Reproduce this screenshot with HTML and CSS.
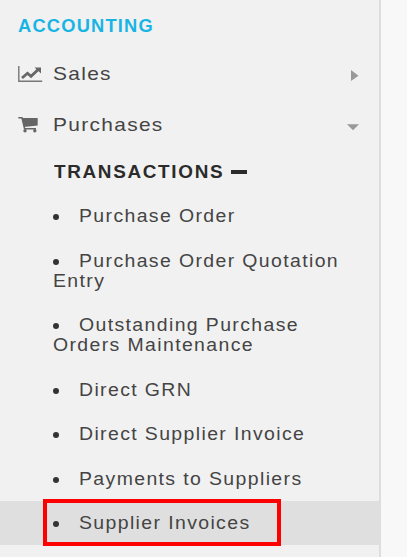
FILE: index.html
```
<!DOCTYPE html>
<html lang="en">
<head>
  <meta charset="UTF-8">
  <meta name="viewport" content="width=device-width, initial-scale=1.0">
  <title>Accounting</title>
  <link rel="stylesheet" href="styles.css">
</head>
<body>
  <nav class="sidebar">
    <h2 class="title">ACCOUNTING</h2>
    <a class="menu">
      <svg class="icon" width="26" height="18" viewBox="0 0 26 18">
        <path d="M.8 1v15.200h23.400" fill="none" stroke="#777" stroke-width="1.400"/>
        <path d="M4 13l5.500-4.700 3.500 3 7.500-7" fill="none" stroke="#666" stroke-width="2.800"/>
        <path d="M16.500 2.500h6.500v6z" fill="#666"/>
      </svg>
      <span class="label">Sales</span>
      <svg class="arrow" width="12" height="14" viewBox="0 0 12 14"><path d="M4 3l7.500 5.700-7.500 5.300z" fill="#999"/></svg>
    </a>
    <a class="menu">
      <svg class="icon" width="26" height="18" viewBox="0 0 26 18">
        <path d="M.3 1.800h3.700l2.600 10.900h11.400" fill="none" stroke="#666" stroke-width="1.500"/>
        <path d="M3.800 2h15.900v7.500L6 11z" fill="#666"/>
        <circle cx="7" cy="14.700" r="1.700" fill="#666"/>
        <circle cx="16.800" cy="14.700" r="1.700" fill="#666"/>
      </svg>
      <span class="label">Purchases</span>
      <svg class="arrow" width="12" height="14" viewBox="0 0 12 14"><path d="M0 6.300h12L6 12.300z" fill="#999"/></svg>
    </a>
    <h3 class="group"><span class="group-text">TRANSACTIONS</span><span class="minus"></span></h3>
    <ul class="list">
      <li class="item"><i class="dot"></i><span class="text">Purchase Order</span></li>
      <li class="item"><i class="dot"></i><span class="text">Purchase Order Quotation</span><br><span class="text">Entry</span></li>
      <li class="item"><i class="dot"></i><span class="text">Outstanding Purchase</span><br><span class="text">Orders Maintenance</span></li>
      <li class="item"><i class="dot"></i><span class="text">Direct GRN</span></li>
      <li class="item"><i class="dot"></i><span class="text">Direct Supplier Invoice</span></li>
      <li class="item"><i class="dot"></i><span class="text">Payments to Suppliers</span></li>
      <li class="item active"><i class="dot"></i><span class="text">Supplier Invoices</span><span class="mark"></span></li>
    </ul>
  </nav>
</body>
</html>
```
FILE: styles.css
```
* {
  box-sizing: border-box;
}
body {
  margin: 0;
  height: 557px;
  overflow: hidden;
  background: #f8f8f8;
  font-family: "Liberation Sans", Arial, sans-serif;
  color: #444;
}
.sidebar {
  width: 381px;
  height: 557px;
  padding-top: 16px;
  background: #f1f1f1;
  border-right: 2px solid #dedede;
}
.title {
  margin: 0 0 12px 18px;
  font-size: 17.5px;
  line-height: 20px;
  letter-spacing: 1.15px;
  color: #18b4e4;
  transform: scaleX(1.045);
  transform-origin: 0 50%;
}
.menu {
  display: flex;
  align-items: center;
  height: 51px;
  padding: 0 20px 0 18px;
}
.icon {
  flex: none;
  margin-right: 9px;
}
.label {
  flex: 1;
  font-size: 19px;
  letter-spacing: 1.2px;
  transform: scaleX(1.1);
  transform-origin: 0 50%;
}
.group {
  display: flex;
  align-items: center;
  margin: 12px 0 11.5px 54px;
  font-size: 17.5px;
  line-height: 20px;
  color: #2b2b2b;
}
.group-text {
  width: 177px;
  letter-spacing: 1.55px;
  transform: scaleX(1.08);
  transform-origin: 0 50%;
}
.minus {
  width: 16px;
  height: 4px;
  background: #2b2b2b;
}
.list {
  margin: 0;
  padding: 0;
  list-style: none;
}
.item {
  position: relative;
  padding: 12.5px 0 12px 53px;
  font-size: 17.5px;
  line-height: 20px;
  letter-spacing: 1.25px;
  white-space: nowrap;
}
.text {
  display: inline-block;
  transform: scaleX(1.11);
  transform-origin: 0 50%;
}
.dot {
  display: inline-block;
  width: 6px;
  height: 6px;
  margin-right: 20px;
  border-radius: 50%;
  background: #333;
  vertical-align: 2px;
}
.active {
  background: #dfdfdf;
}
/* red frame around the current page */
.mark {
  position: absolute;
  left: 43px;
  top: -2px;
  width: 238px;
  height: 47px;
  border: 4px solid #fe0000;
}
```
